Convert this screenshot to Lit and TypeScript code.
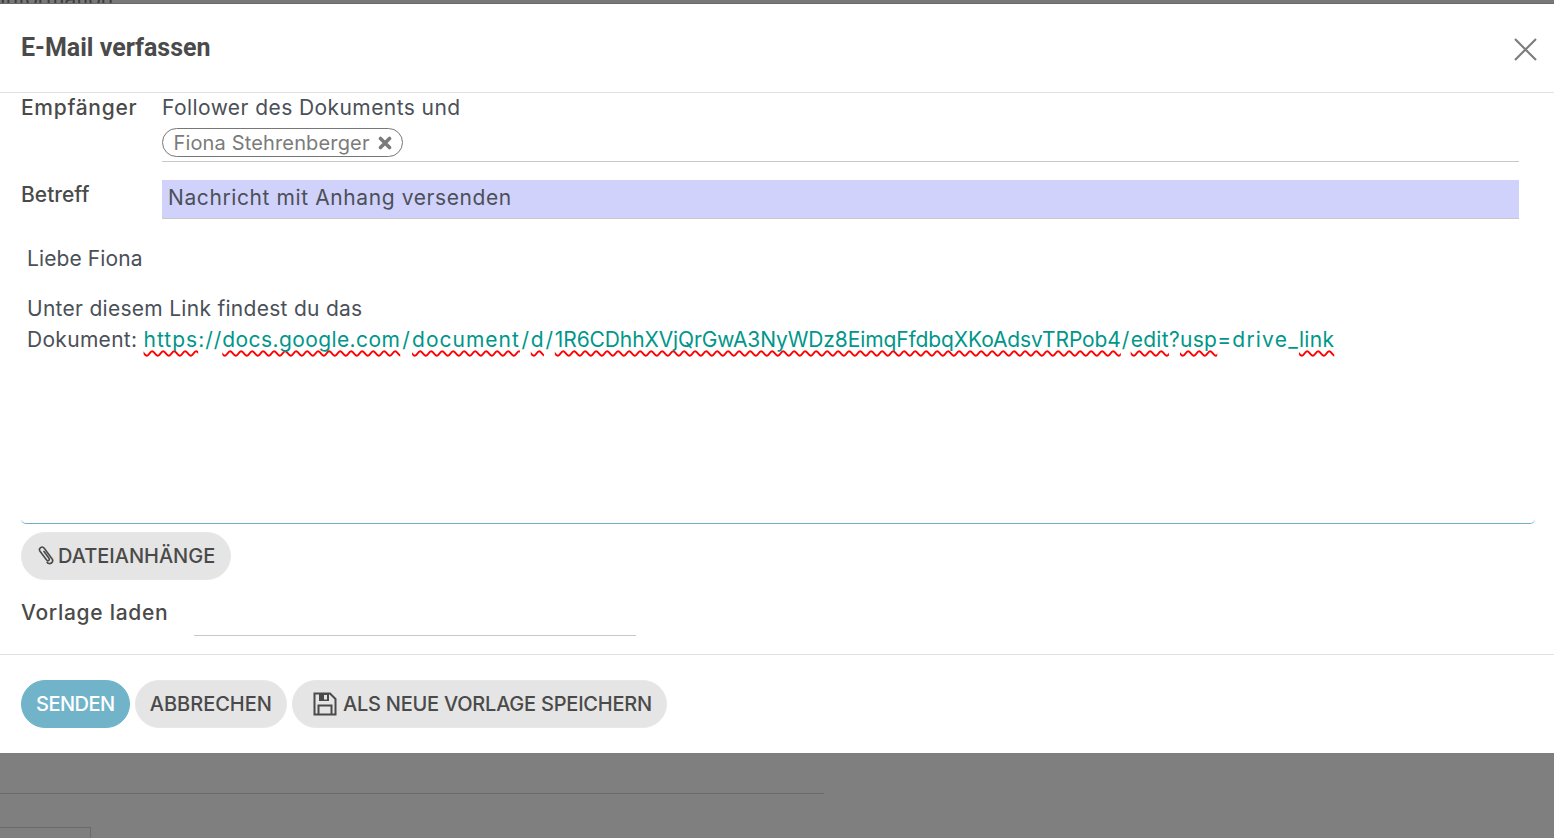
import { LitElement, html, css } from "lit";
import { customElement } from "lit/decorators.js";

@customElement("app-root")
export class AppRoot extends LitElement {
  static styles = css`
    :host { display: block; height: 838px; overflow: hidden; background: #7f7f7f; font-family: "Inter", "Liberation Sans", sans-serif; color: #4a4a4a; }
    .strip { height: 3px; overflow: hidden; border-bottom: 1px solid #6a6a6a; background: #787878; color: #3c3c3c; }
    .strip span { display: block; margin-top: -11px; font-size: 21px; line-height: 20px; white-space: nowrap; }
    .modal { background: #fff; height: 749px; display: flex; flex-direction: column; box-sizing: border-box; }
    .head { height: 89px; flex: none; box-sizing: border-box; border-bottom: 1px solid #dee2e6; display: flex; justify-content: space-between; padding: 30px 17px 0 21px; }
    h1 { margin: 0; font: 700 25px/28px Roboto, sans-serif; color: #4a4a4a; }
    .close { width: 24px; height: 24px; margin-top: 3px; }
    .body { flex: 1; min-height: 0; padding: 0 35px 0 21px; display: flex; flex-direction: column; }
    .row { display: grid; grid-template-columns: 141px 1fr; font-size: 21px; }
    .lab { font-weight: 500; color: #4a4a4a; }
    .to { height: 68px; }
    .to-line { line-height: 30px; color: #4b5058; letter-spacing: 0.42px; }
    .to .lab { color: #4a4a4a; letter-spacing: 0.7px; }
    .to-field { border-bottom: 1px solid #c8c8c8; height: 39px; box-sizing: border-box; display: flex; align-items: flex-start; padding-top: 5px; }
    .chip { display: inline-flex; align-items: center; gap: 8px; height: 29px; box-sizing: border-box; border: 1.5px solid #777; border-radius: 15px; padding: 0 10px 0 10.5px; font-size: 20px; letter-spacing: 0.15px; color: #7b7b7b; }
    .subj { margin-top: 19px; }
    .subj .lab { line-height: 30px; }
    .subj-in { height: 39px; background: #d0d2fc; border-bottom: 1px solid #c8c8c8; box-sizing: border-box; padding: 0 6px; line-height: 36px; color: #4b5058; letter-spacing: 0.6px; }
    .editor { margin-top: 19px; margin-right: -16px; height: 286px; box-sizing: border-box; padding: 5px 6px 0; border-bottom: 1px solid #6fb0c6; border-radius: 0 0 5px 5px; font-size: 21px; line-height: 31px; color: #4b5058; }
    .editor p { margin: 0 0 19px; letter-spacing: 0.1px; }
    .l1 { letter-spacing: 0.28px; }
    .l2 { letter-spacing: 0.3px; white-space: nowrap; }
    a { color: #01968a; text-decoration: none; }
    .sp { text-decoration: underline wavy #f00 1.5px; text-underline-offset: 3px; text-decoration-skip-ink: none; }
    .s1 { letter-spacing: 1px; }
    .s2 { letter-spacing: 0.4px; }
    .s3 { letter-spacing: -0.11px; }
    .s4 { letter-spacing: 1.2px; }
    .sl { padding: 0 2px; }
    .sl2 { padding: 0 1.5px; }
    .sl4 { padding: 0 1px; }
    .sl3 { letter-spacing: 1px; }
    .btn { display: inline-flex; align-items: center; height: 48px; box-sizing: border-box; border-radius: 24px; background: #e5e5e5; border: 1px solid #e8e8e8; padding: 0 14px; font-size: 20px; font-weight: 500; color: #4a4a4a; white-space: nowrap; }
    .attach { align-self: flex-start; margin-top: 8px; gap: 4px; padding: 0 15px 1px 14px; }
    .tpl { display: flex; margin-top: 12px; height: 44px; }
    .tpl .lab { font-size: 21px; width: 173px; line-height: 42px; letter-spacing: 0.7px; }
    .tpl-in { width: 442px; height: 44px; border-bottom: 1px solid #c8c8c8; box-sizing: border-box; }
    .foot { flex: none; height: 99px; box-sizing: border-box; border-top: 1px solid #dee2e6; padding: 25px 21px; display: flex; gap: 5px; }
    .primary { background: #71b4ca; border-color: #71b4ca; color: #fff; letter-spacing: -0.5px; }
    .save { gap: 6px; padding-left: 20px; letter-spacing: -0.23px; }
    .bd { height: 85px; }
    .bd-line { width: 824px; height: 40px; border-bottom: 1px solid #6a6a6a; }
    .bd-box { width: 90px; height: 20px; margin-top: 33px; border: 1px solid #6a6a6a; border-left: 0; }
  `;

  render() {
    return html`
      <div class="strip"><span>Information</span></div>
      <div class="modal">
        <div class="head">
          <h1>E-Mail verfassen</h1>
          <svg class="close" viewBox="0 0 24 24" fill="none" stroke="#7d7d7d" stroke-width="2.2"><path d="M2 2l21 21M23 2L2 23"/></svg>
        </div>
        <div class="body">
          <div class="row to">
            <div class="lab to-line">Empfänger</div>
            <div>
              <div class="to-line">Follower des Dokuments und</div>
              <div class="to-field"><span class="chip">Fiona Stehrenberger <svg width="14" height="14" viewBox="0 0 14 14" stroke="#7b7b7b" stroke-width="3.6" stroke-linecap="round"><path d="M2.5 2.5l9 9M11.5 2.5l-9 9"/></svg></span></div>
            </div>
          </div>
          <div class="row subj">
            <div class="lab">Betreff</div>
            <div class="subj-in">Nachricht mit Anhang versenden</div>
          </div>
          <div class="editor">
            <p>Liebe Fiona</p>
            <div class="l1">Unter diesem Link findest du das</div>
            <div class="l2">Dokument: <a href="#"><span class="sp s1">https</span><span class="sl3">://</span><span class="sp s2">docs.google.com</span><span class="sl">/</span><span class="sp s1">document</span><span class="sl2">/</span><span class="sp">d</span><span class="sl2">/</span><span class="sp s3">1R6CDhhXVjQrGwA3NyWDz8EimqFfdbqXKoAdsvTRPob4</span><span class="sl4">/</span><span class="sp">edit</span>?<span class="sp">usp</span><span class="s4">=drive_</span><span class="sp">link</span></a></div>
          </div>
          <span class="btn attach"><svg width="18" height="19" viewBox="0 0 18 19" fill="none" stroke="#4a4a4a" stroke-width="1.6" stroke-linecap="round"><path d="M8 5.5l5 6.8a1.5 1.5 0 0 1-2.4 1.8L4 5.2a2.6 2.6 0 0 1 .6-3.6 2.6 2.6 0 0 1 3.6.6l7.8 10.6a3 3 0 0 1-4.8 3.6"/></svg>DATEIANHÄNGE</span>
          <div class="tpl"><div class="lab">Vorlage laden</div><div class="tpl-in"></div></div>
        </div>
        <div class="foot">
          <span class="btn primary">SENDEN</span>
          <span class="btn">ABBRECHEN</span>
          <span class="btn save"><svg width="24" height="24" viewBox="0 0 24 24" fill="none" stroke="#4a4a4a" stroke-width="2"><path d="M1.5 1.5h15.5l5.5 5.5v15.5H1.5z"/><path d="M6 1.5h10v7.5H6z" fill="#4a4a4a" stroke="none"/><path d="M11 3h3v4.5h-3z" fill="#e5e5e5" stroke="none"/><path d="M5.5 22.5V13.5h13v9"/></svg>ALS NEUE VORLAGE SPEICHERN</span>
        </div>
      </div>
      <div class="bd"><div class="bd-line"></div><div class="bd-box"></div></div>
    `;
  }
}
